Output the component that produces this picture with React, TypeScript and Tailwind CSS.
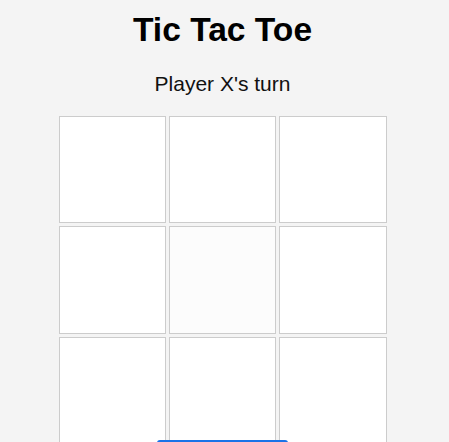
import React from "react";

export default function App() {
  const cells = Array.from({ length: 9 }, (_, i) => i);
  return (
    <div className="min-h-[442px] w-[449px] overflow-hidden bg-[#f4f4f4]" style={{ fontFamily: '"Liberation Sans", Arial, sans-serif' }}>
      <div className="flex w-[445px] flex-col items-center pt-[11px]">
        <h1 className="text-[33.6px] font-bold leading-[37px] text-black">Tic Tac Toe</h1>
        <p className="mt-[24px] text-[21px] leading-[24px] text-[#111]">Player X's turn</p>
        <div className="mt-[20px] grid h-[324px] w-[328px] grid-cols-3 gap-[3px]">
          {cells.map((i) => (
            <button
              key={i}
              className={`h-[107.33px] border border-[#cccccc] ${i === 4 ? "bg-[#fcfcfc]" : "bg-white"}`}
            />
          ))}
        </div>
        <button className="relative z-10 h-[40px] w-[131px] rounded-[3px] bg-[#1a73e8] text-[16px] text-white">
          Reset Game
        </button>
      </div>
    </div>
  );
}
